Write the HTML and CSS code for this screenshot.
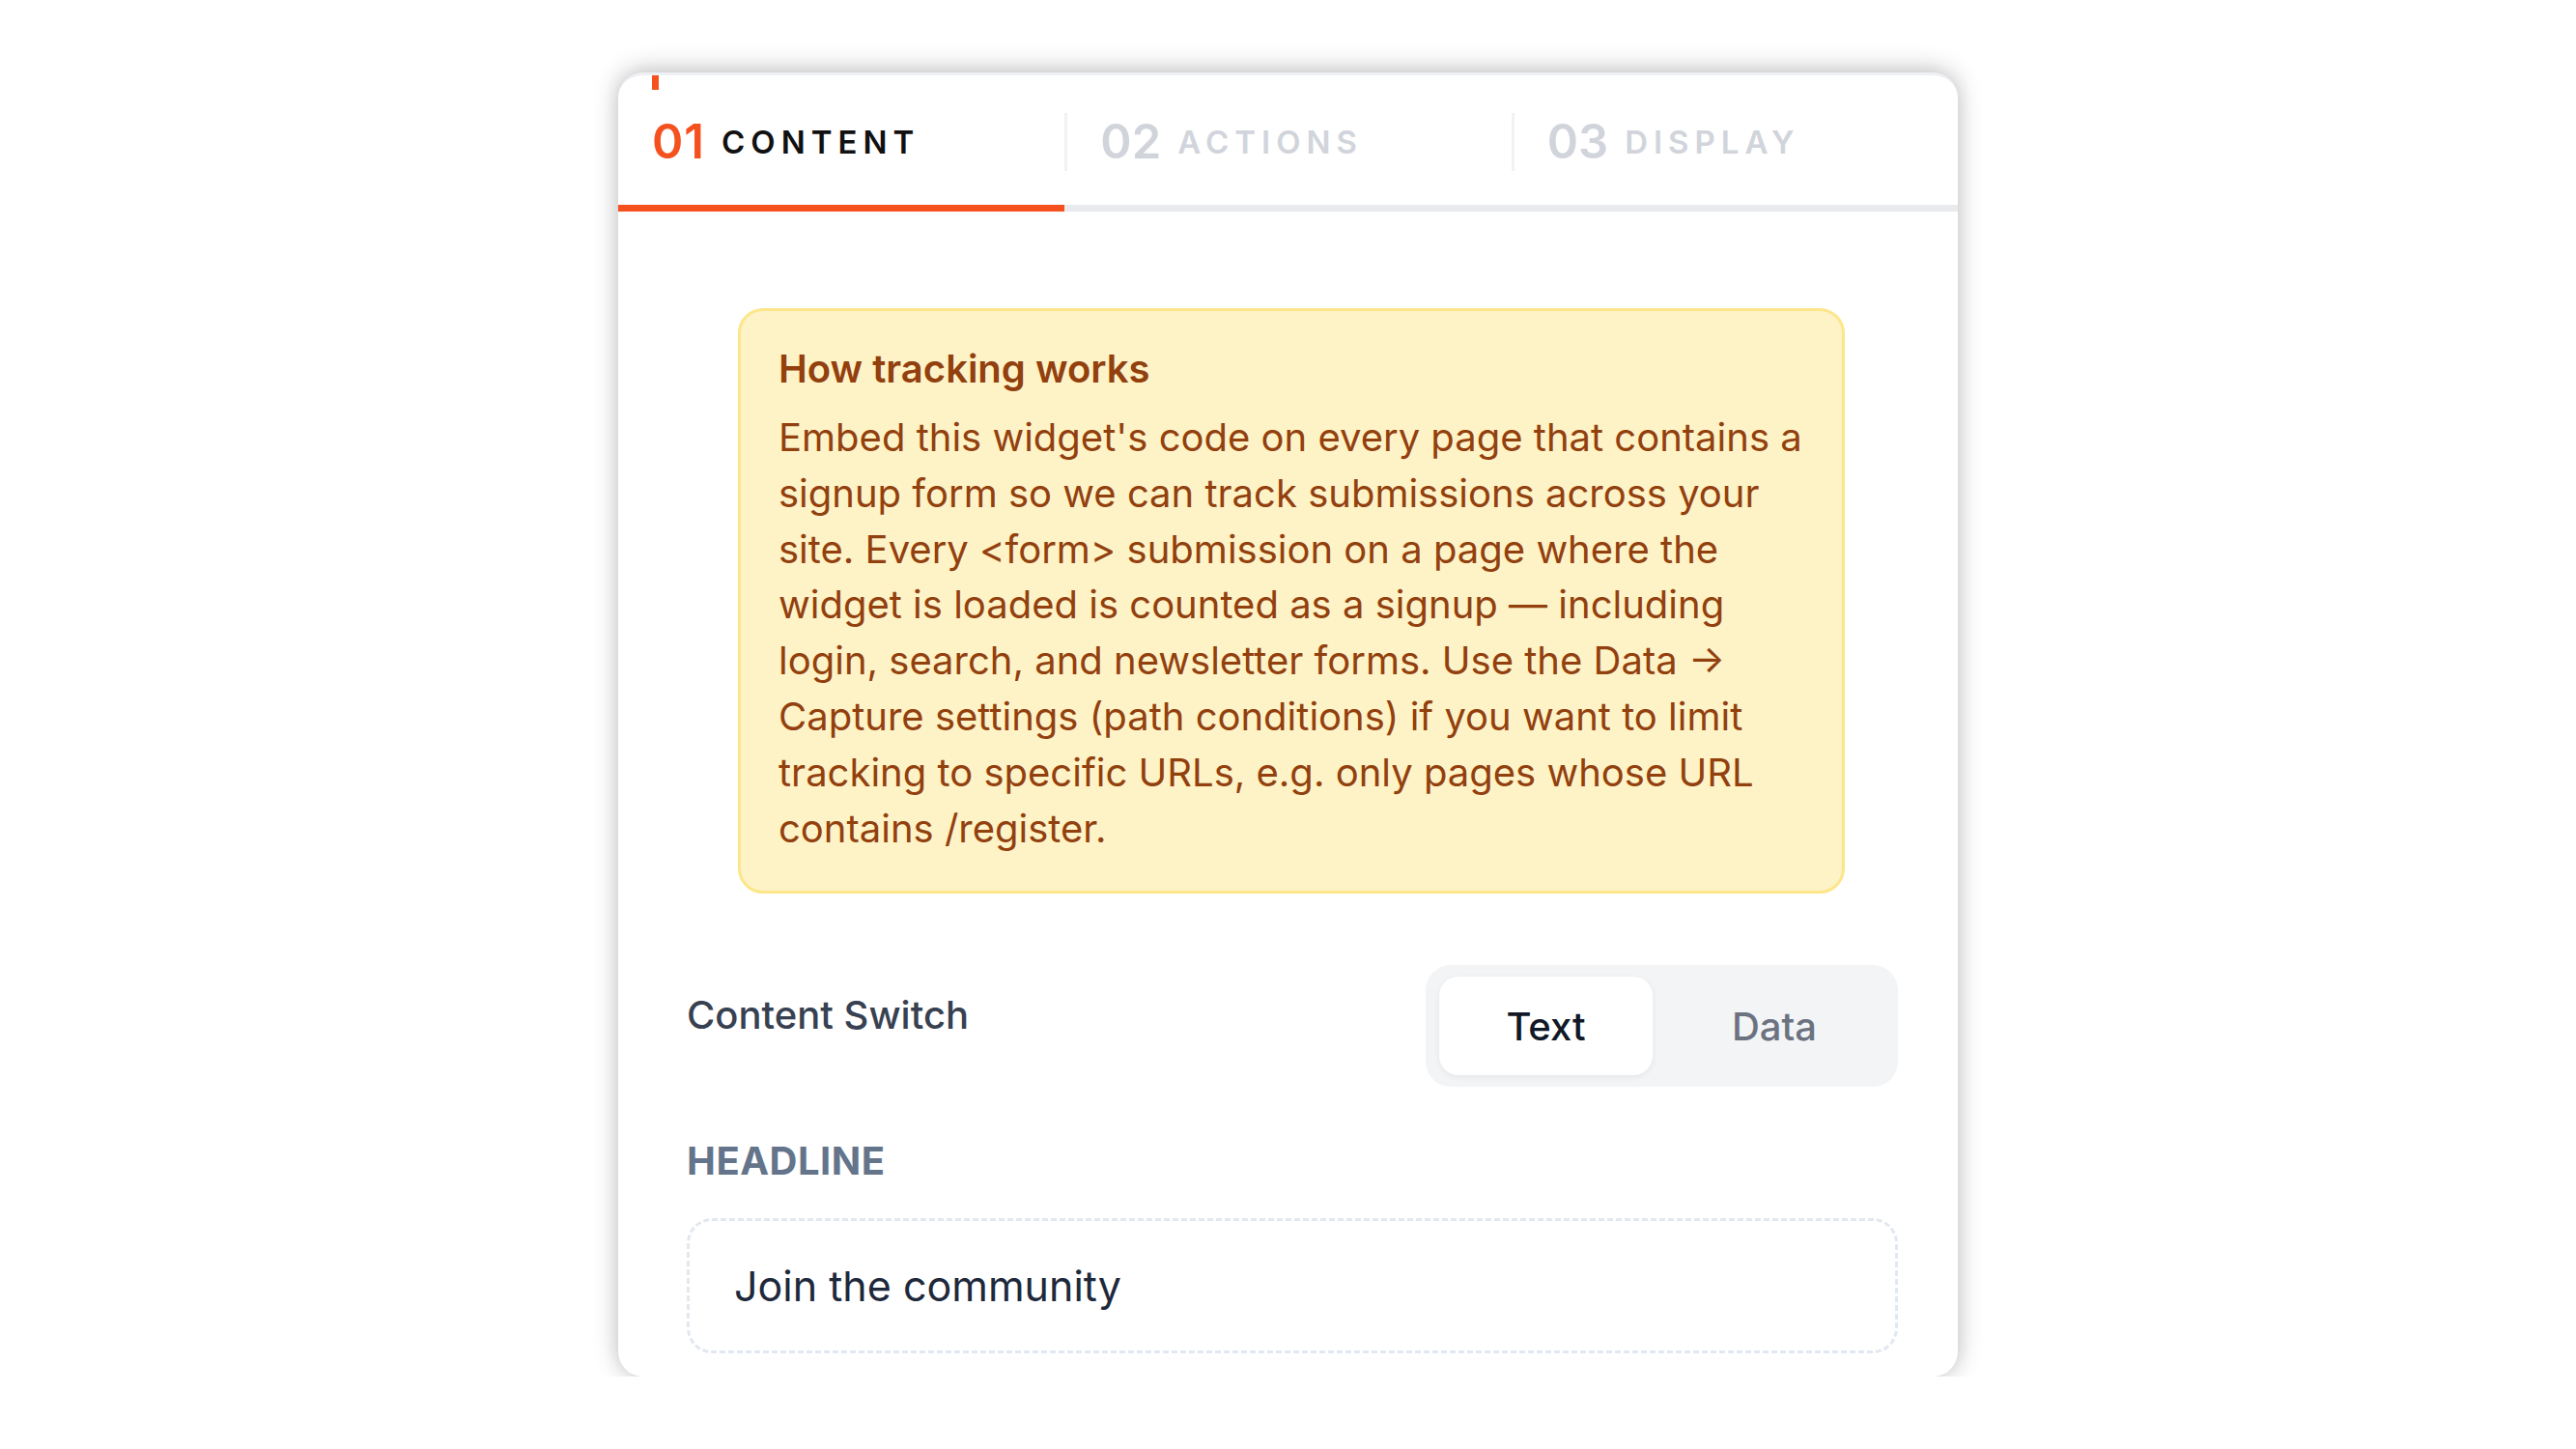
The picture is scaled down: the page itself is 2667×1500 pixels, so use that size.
FILE: index.html
```html
<!DOCTYPE html>
<html lang="en">
<head>
<meta charset="utf-8">
<title>Widget editor</title>
<link rel="stylesheet" href="styles.css">
</head>
<body>
<div class="card">
  <span class="tick"></span>
  <nav class="tabs">
    <div class="tab active"><div class="tab-inner first"><span class="num">01</span><span class="label">CONTENT</span></div></div>
    <div class="tab"><div class="tab-inner"><span class="num">02</span><span class="label">ACTIONS</span></div></div>
    <div class="tab"><div class="tab-inner"><span class="num">03</span><span class="label">DISPLAY</span></div></div>
  </nav>
  <div class="body">
    <div class="notice">
      <div class="notice-title">How tracking works</div>
      <p class="notice-text">Embed this widget's code on every page that contains a signup form so we can track submissions across your site. Every &lt;form&gt; submission on a page where the widget is loaded is counted as a signup — including login, search, and newsletter forms. Use the Data → Capture settings (path conditions) if you want to limit tracking to specific URLs, e.g. only pages whose URL contains /register.</p>
    </div>
    <div class="switch-row">
      <div class="switch-label">Content Switch</div>
      <div class="segmented">
        <div class="seg active">Text</div>
        <div class="seg">Data</div>
      </div>
    </div>
    <div class="field-label">HEADLINE</div>
    <div class="input">Join the community</div>
  </div>
</div>
</body>
</html>
```
FILE: styles.css
```css
html, body {
  margin: 0;
  padding: 0;
  background: #ffffff;
}
body {
  font-family: Inter, "Noto Sans", sans-serif;
  color: #111827;
}
.card {
  position: relative;
  margin: 75px 0 0 640px;
  width: 1387px;
  height: 1350px;
  background: #ffffff;
  border-radius: 26px;
  box-shadow: 0 -3px 26px rgba(0, 0, 0, 0.24), 0 4px 20px rgba(0, 0, 0, 0.06);
  overflow: hidden;
  box-sizing: border-box;
  border-top: 3px solid #eef0f3;
}
.tick {
  position: absolute;
  left: 35px;
  top: 0;
  width: 7px;
  height: 15px;
  background: #f4511e;
}
.tabs {
  display: flex;
  height: 141px;
  box-shadow: inset 0 -7px 0 #e8eaee;
}
.tab {
  flex: 1;
  display: flex;
  align-items: center;
  padding-bottom: 4px;
  box-sizing: border-box;
}
.tab.active {
  box-shadow: inset 0 -7px 0 #f4511e;
}
.tab-inner {
  display: flex;
  align-items: center;
  height: 60px;
  padding-left: 34px;
  border-left: 3px solid #f1f2f4;
  gap: 17px;
}
.tab-inner.first {
  border-left: 0;
  padding-left: 35px;
}
.num {
  font-size: 49px;
  font-weight: 600;
  color: #d1d5db;
  letter-spacing: 0;
}
.label {
  font-size: 33px;
  font-weight: 600;
  letter-spacing: 6px;
  color: #d1d5db;
}
.tab.active .num {
  color: #f4511e;
  letter-spacing: 1px;
}
.tab.active .label {
  color: #111111;
}
.body {
  padding: 100px 62px 0 71px;
}
.notice {
  margin: 0 55px 0 53px;
  background: #fef3c7;
  border: 3px solid #fde68a;
  border-radius: 26px;
  padding: 33px 36px 36px 39px;
  color: #92400e;
}
.notice-title {
  font-size: 40px;
  font-weight: 600;
  line-height: 54px;
  margin-bottom: 15px;
}
.notice-text {
  margin: 0;
  font-size: 40px;
  line-height: 57.8px;
  font-weight: 400;
}
.switch-row {
  display: flex;
  justify-content: space-between;
  align-items: flex-start;
  margin-top: 74px;
}
.switch-label {
  font-size: 40px;
  font-weight: 500;
  color: #374151;
  padding-top: 24px;
  line-height: 56px;
}
.segmented {
  display: flex;
  width: 489px;
  height: 126px;
  box-sizing: border-box;
  padding: 12px 14px;
  background: #f3f4f6;
  border-radius: 26px;
}
.seg {
  flex: 1;
  display: flex;
  align-items: center;
  justify-content: center;
  padding-left: 12px;
  font-size: 40px;
  font-weight: 500;
  color: #6b7280;
  border-radius: 20px;
}
.seg.active {
  flex: 0 0 221px;
  padding-left: 0;
  background: #ffffff;
  color: #111827;
  box-shadow: 0 2px 6px rgba(0, 0, 0, 0.06);
}
.field-label {
  margin-top: 54px;
  font-size: 40px;
  font-weight: 700;
  color: #64748b;
  line-height: 46px;
  letter-spacing: 0.5px;
}
.input {
  margin-top: 36px;
  height: 140px;
  box-sizing: border-box;
  border: 3px dashed #e2e8f0;
  border-radius: 26px;
  display: flex;
  align-items: center;
  padding-left: 46px;
  font-size: 43px;
  color: #1e293b;
}
```
